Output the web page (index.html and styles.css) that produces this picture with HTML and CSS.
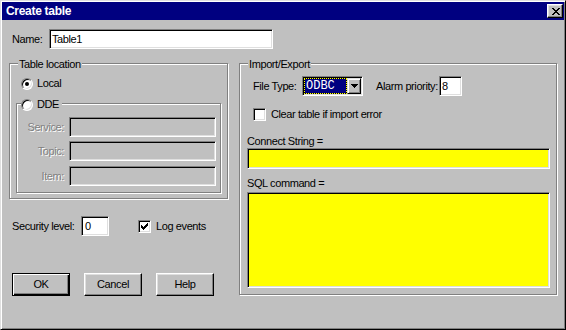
FILE: index.html
```
<!DOCTYPE html>
<html>
<head>
<meta charset="utf-8">
<title>Create table</title>
<link rel="stylesheet" href="styles.css">
</head>
<body>
<div class="window">
  <div class="titlebar">
    <span class="title">Create table</span>
    <span class="close"><svg width="8" height="7" viewBox="0 0 8 7" shape-rendering="crispEdges"><path fill="#000" d="M0 0h2v1h-2z M6 0h2v1h-2z M1 1h2v1h-2z M5 1h2v1h-2z M2 2h4v1h-4z M3 3h2v1h-2z M2 4h4v1h-4z M1 5h2v1h-2z M5 5h2v1h-2z M0 6h2v1h-2z M6 6h2v1h-2z"/></svg></span>
  </div>
  <div class="body">
    <div class="name-row">
      <span class="name-label">Name:</span>
      <div class="field name-field">Table1</div>
    </div>
    <div class="columns">
      <div class="left">
        <div class="group loc">
          <span class="legend">Table location</span>
          <div class="radio-row"><span class="radio checked"></span><span>Local</span></div>
          <div class="group dde">
            <span class="legend dde-legend"><span class="radio"></span><span>DDE</span></span>
            <div class="dde-row"><span class="dis-label">Service:</span><div class="field disabled dde-field"></div></div>
            <div class="dde-row"><span class="dis-label">Topic:</span><div class="field disabled dde-field"></div></div>
            <div class="dde-row last"><span class="dis-label">Item:</span><div class="field disabled dde-field"></div></div>
          </div>
        </div>
        <div class="sec-row">
          <span class="sec-label">Security level:</span>
          <div class="field sec-field">0</div>
          <span class="check checked-box"><svg width="7" height="7" viewBox="0 0 7 7" shape-rendering="crispEdges"><path fill="#000" d="M6 0h1v1h-1z M5 1h2v1h-2z M0 2h1v1h-1z M4 2h3v1h-3z M0 3h2v1h-2z M3 3h3v1h-3z M0 4h5v1h-5z M1 5h3v1h-3z M2 6h1v1h-1z"/></svg></span>
          <span class="check-text">Log events</span>
        </div>
        <div class="buttons">
          <button class="btn default">OK</button>
          <button class="btn">Cancel</button>
          <button class="btn">Help</button>
        </div>
      </div>
      <div class="group ie">
        <span class="legend">Import/Export</span>
        <div class="ft-row">
          <span class="ft-label">File Type:</span>
          <div class="combo">
            <div class="combo-sel">ODBC</div>
            <div class="combo-btn"><svg width="7" height="4" viewBox="0 0 7 4" shape-rendering="crispEdges"><path fill="#000" d="M0 0h7v1H0z M1 1h5v1H1z M2 2h3v1H2z M3 3h1v1H3z"/></svg></div>
          </div>
          <span class="ap-label">Alarm priority:</span>
          <div class="field ap-field">8</div>
        </div>
        <div class="clear-row">
          <span class="check"></span>
          <span class="check-text">Clear table if import error</span>
        </div>
        <div class="sub-label conn-label">Connect String =</div>
        <div class="field yellow conn-field"></div>
        <div class="sub-label sql-label">SQL command =</div>
        <div class="field yellow sql-field"></div>
      </div>
    </div>
  </div>
</div>
</body>
</html>
```
FILE: styles.css
```
* { box-sizing: border-box; }

html, body {
  margin: 0;
  padding: 0;
  background: #c0c0c0;
}

body {
  font-family: "Liberation Sans", Arial, sans-serif;
  font-size: 11px;
  line-height: 13px;
  letter-spacing: -0.4px;
  color: #000;
}

.window {
  width: 566px;
  height: 330px;
  background: #c0c0c0;
  border: 1px solid;
  border-color: #dfdfdf #000 #000 #dfdfdf;
  box-shadow: inset 1px 1px #fff, inset -1px -1px #808080;
  padding: 1px;
  display: flex;
  flex-direction: column;
}

.titlebar {
  height: 18px;
  background: #000080;
  display: flex;
  align-items: center;
  justify-content: space-between;
  padding: 0 1px 0 4px;
}

.title {
  color: #fff;
  font-weight: bold;
  font-size: 12px;
  letter-spacing: -0.3px;
  line-height: 18px;
}

.close {
  width: 16px;
  height: 14px;
  background: #c0c0c0;
  border: 1px solid;
  border-color: #fff #000 #000 #fff;
  box-shadow: inset -1px -1px #808080, inset 1px 1px #dfdfdf;
  display: flex;
  align-items: center;
  justify-content: center;
  padding-left: 1px;
}

.close svg, .check svg, .combo-btn svg { display: block; }

.body {
  flex: 1;
  padding: 9px 7px 0 7px;
  display: flex;
  flex-direction: column;
}

.name-row {
  display: flex;
  align-items: center;
  padding-left: 3px;
}

.name-label { width: 37px; }

.field {
  height: 20px;
  border: 1px solid;
  border-color: #808080 #fff #fff #808080;
  box-shadow: inset 1px 1px #000, inset -1px -1px #dfdfdf;
  background: #fff;
  padding: 0 2px;
  line-height: 18px;
}

.field.disabled { background: #c0c0c0; }
.field.yellow { background: #ffff00; }

.name-field { width: 224px; }

.columns {
  display: flex;
  gap: 11px;
  margin-top: 14px;
  align-items: flex-start;
}

.left {
  width: 219px;
  display: flex;
  flex-direction: column;
}

.group {
  position: relative;
  border: 1px solid #808080;
  box-shadow: 1px 1px #fff, inset 1px 1px #fff;
}

.legend {
  position: absolute;
  left: 8px;
  top: -6px;
  padding: 0 1px;
  background: #c0c0c0;
  line-height: 13px;
  white-space: nowrap;
}

.loc {
  height: 136px;
  padding: 13px 6px 0 6px;
}

.radio-row {
  display: flex;
  align-items: center;
  gap: 4px;
  height: 13px;
  margin-left: 5px;
}

.radio {
  width: 12px;
  height: 12px;
  border-radius: 50%;
  border: 1px solid;
  border-color: #808080 #fff #fff #808080;
  box-shadow: inset 1px 1px #000, inset -1px -1px #dfdfdf;
  background: #fff;
  display: flex;
  align-items: center;
  justify-content: center;
  flex: none;
}

.radio.checked::after {
  content: "";
  width: 4px;
  height: 4px;
  border-radius: 50%;
  background: #000;
}

.dde {
  margin-top: 13px;
  height: 90px;
  padding: 13px 4px 0 0;
  display: flex;
  flex-direction: column;
  gap: 4px;
}

.dde-legend {
  left: 4px;
  display: flex;
  align-items: center;
  gap: 4px;
  padding: 0 3px 0 0;
}

.dde-row {
  display: flex;
  align-items: center;
}

.dde-row.last { margin-top: 1px; }

.dis-label {
  width: 52px;
  text-align: right;
  padding-right: 5px;
  color: #808080;
  text-shadow: 1px 1px #fff;
}

.dde-field { flex: 1; }

.sec-row {
  margin-top: 17px;
  height: 20px;
  display: flex;
  align-items: center;
  padding-left: 3px;
}

.sec-label { width: 69px; }
.sec-field { width: 28px; padding-left: 3px; }

.check {
  width: 13px;
  height: 13px;
  border: 1px solid;
  border-color: #808080 #fff #fff #808080;
  box-shadow: inset 1px 1px #000, inset -1px -1px #dfdfdf;
  background: #fff;
  display: flex;
  align-items: center;
  justify-content: center;
  flex: none;
}

.checked-box { margin-left: 29px; }

.check-text { margin-left: 5px; white-space: nowrap; }

.buttons {
  margin-top: 37px;
  display: flex;
  gap: 14px;
  padding-left: 3px;
}

.btn {
  width: 58px;
  height: 23px;
  padding: 0;
  margin: 0;
  background: #c0c0c0;
  border: 1px solid;
  border-color: #fff #000 #000 #fff;
  box-shadow: inset -1px -1px #808080, inset 1px 1px #dfdfdf;
  font: inherit;
  letter-spacing: inherit;
  color: #000;
  display: flex;
  align-items: center;
  justify-content: center;
}

.btn.default {
  border: 1px solid #000;
  box-shadow: inset 1px 1px #fff, inset -1px -1px #000, inset -2px -2px #808080;
}

.ie {
  width: 318px;
  height: 232px;
  padding: 12px 6px 6px 7px;
  display: flex;
  flex-direction: column;
}

.ft-row {
  height: 20px;
  display: flex;
  align-items: center;
  padding-left: 6px;
}

.ft-label { width: 49px; }

.combo {
  width: 61px;
  height: 20px;
  padding: 1px;
  border: 1px solid;
  border-color: #808080 #fff #fff #808080;
  box-shadow: inset 1px 1px #000, inset -1px -1px #dfdfdf;
  background: #fff;
  display: flex;
}

.combo-sel {
  width: 43px;
  height: 16px;
  border: 1px dotted #ffff00;
  background: linear-gradient(#000080, #000080) padding-box, #000;
  color: #fff;
  font-family: "Liberation Mono", monospace;
  font-size: 12px;
  letter-spacing: 0;
  line-height: 14px;
  padding-left: 1px;
}

.combo-btn {
  width: 14px;
  height: 16px;
  background: #c0c0c0;
  border: 1px solid;
  border-color: #dfdfdf #000 #000 #dfdfdf;
  box-shadow: inset 1px 1px #fff, inset -1px -1px #808080;
  display: flex;
  align-items: center;
  justify-content: center;
}

.ap-label { margin-left: 13px; width: 63px; white-space: nowrap; }
.ap-field { width: 23px; }

.clear-row {
  margin-top: 12px;
  height: 13px;
  display: flex;
  align-items: center;
  padding-left: 6px;
}

.sub-label { height: 13px; white-space: nowrap; }
.conn-label { margin-top: 14px; }
.conn-field { height: 21px; }
.sql-label { margin-top: 8px; }
.sql-field { margin-top: 2px; flex: 1; height: auto; }
```
